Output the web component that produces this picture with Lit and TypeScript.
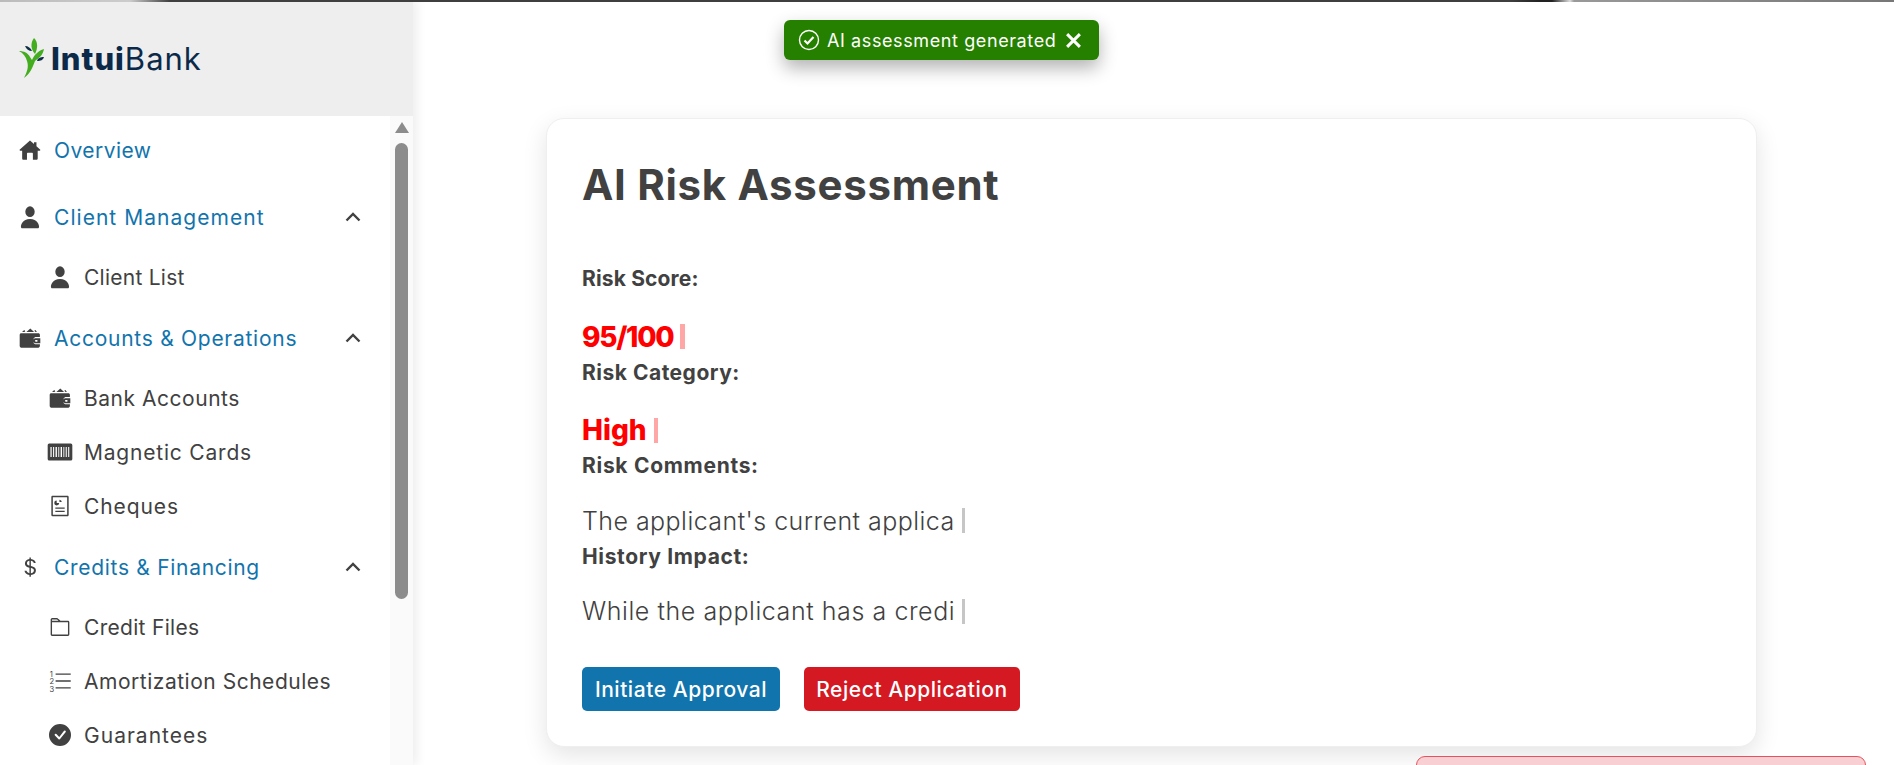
import { LitElement, html, css, svg } from "lit";
import { customElement } from "lit/decorators.js";

const ICONS: Record<string, any> = {
  home: svg`<path d="M8 1 .6 7.6a.5.5 0 0 0 .35.9H2.3v5.6c0 .5.4.9.9.9h2.6v-4.3c0-.4.3-.7.7-.7h2.9c.4 0 .7.3.7.7V15h2.6c.5 0 .9-.4.9-.9V8.500h1.350a.5.5 0 0 0 .35-.9L12.7 5.2V2.300h-1.800v1.300Z"/>`,
  person: svg`<g transform="translate(8 8) scale(1.1 1.25) translate(-8 -8)"><path d="M3 14.6s-1 0-1-1 1-4.400 6-4.400 6 3.400 6 4.400-1 1-1 1H3Zm5-6.600a3.100 3.100 0 1 0 0-6.200A3.100 3.100 0 0 0 8 8Z"/></g>`,
  wallet: svg`<path d="M1.6 4.6h12.5c.6 0 1.100.5 1.100 1.100v1.500h-3.400a3 3 0 0 0 0 5.400h3.400v1.300c0 .6-.5 1.100-1.100 1.100H1.600c-.6 0-1.100-.5-1.100-1.100V5.700c0-.6.5-1.100 1.100-1.100Zm10.300 3.600h3.600v3.600h-3.600a1.800 1.800 0 0 1 0-3.600Zm.2 1.200a.7.7 0 0 0 0 1.300h1.300V9.400ZM2.200 3.700l1.600-1.500.8.8-.7.7Zm3.200 0L8.200 1l2.800 2.700Zm6.600 0-.9-.9.9-.6 1 1.500Z"/>`,
  card: svg`<g transform="translate(8 8) scale(1.12 1.12) translate(-8 -8)"><path fill-rule="evenodd" d="M1 2.500h14a1 1 0 0 1 1 1v9a1 1 0 0 1-1 1H1a1 1 0 0 1-1-1v-9a1 1 0 0 1 1-1Zm.8 2.200v6.600h.8V4.700Zm1.700 0v6.600h.7V4.700Zm1.600 0v6.600h.9V4.700Zm1.800 0v6.600h.6V4.700Zm1.500 0v6.600h.9V4.700Zm1.800 0v6.600h.6V4.700Zm1.500 0v6.600h.7V4.700Zm1.600 0v6.600h.7V4.700Z"/></g>`,
  cheque: svg`<path fill-rule="evenodd" d="M2.600.5h10.800c.5 0 .9.4.9.9v13.200c0 .5-.4.9-.9.9H2.600a.9.9 0 0 1-.9-.9V1.400c0-.5.4-.9.9-.9Zm.2 1.100v12.800h10.400V1.600Z"/><path d="M5.600 4a1.800 1.800 0 1 0 1.800 1.800H5.600Zm2-.6v1.700h1.700a1.800 1.800 0 0 0-1.700-1.700ZM4.600 9h6.800v1H4.600Zm0 2.400h6.800v1H4.600Z"/>`,
  dollar: svg`<path d="M4 10.781c.148 1.667 1.513 2.850 3.591 3.003V15h1.043v-1.216c2.270-.179 3.678-1.438 3.678-3.300 0-1.590-.947-2.510-2.956-3.028l-.722-.187V3.467c1.122.11 1.879.714 2.070 1.616h1.470c-.166-1.600-1.540-2.748-3.540-2.875V1H7.591v1.233c-1.939.23-3.270 1.472-3.270 3.156 0 1.454.966 2.483 2.661 2.917l.61.162v4.031c-1.149-.17-1.940-.8-2.131-1.718H4zm3.391-3.836c-1.043-.263-1.600-.825-1.600-1.616 0-.944.704-1.641 1.800-1.828v3.495l-.2-.05zm1.591 1.872c1.287.323 1.852.859 1.852 1.769 0 1.097-.826 1.828-2.200 1.939V8.730l.348.086z"/>`,
  folder: svg`<path fill="none" stroke="currentColor" stroke-width="1" d="M1.700 3.900V2.600c0-.4.3-.6.6-.6h3.400c.3 0 .5.1.7.3L8.200 4h5.600c.3 0 .5.2.5.5v9c0 .3-.2.5-.5.5H2.200a.5.5 0 0 1-.5-.5V4h6.500"/>`,
  list: svg`<path fill="none" stroke="currentColor" stroke-width="1" d="M4.800 3h11M4.800 8h11M4.800 13h11"/><text x="0.6" y="5.200" font-size="5.500" font-family="Inter, sans-serif" fill="currentColor">1</text><text x="0.300" y="10.500" font-size="5.500" font-family="Inter, sans-serif" fill="currentColor">2</text><text x="0.300" y="15.800" font-size="5.500" font-family="Inter, sans-serif" fill="currentColor">3</text>`,
  check: svg`<path d="M16 8A8 8 0 1 1 0 8a8 8 0 0 1 16 0Zm-3.970-3.030a.75.75 0 0 0-1.080.02L7.480 9.420 5.380 7.300a.75.75 0 0 0-1.060 1.060L6.970 11a.75.75 0 0 0 1.080-.02l3.990-4.990a.75.75 0 0 0-.01-1.020Z"/>`,
};

type Item = { icon: string; label: string; ls: number };
type Group = Item & { children: Item[] };

const GROUPS: Group[] = [
  { icon: "home", label: "Overview", ls: 0.45, children: [] },
  {
    icon: "person",
    label: "Client Management",
    ls: 1.04,
    children: [{ icon: "person", label: "Client List", ls: 0.25 }],
  },
  {
    icon: "wallet",
    label: "Accounts & Operations",
    ls: 0.73,
    children: [
      { icon: "wallet", label: "Bank Accounts", ls: 0.53 },
      { icon: "card", label: "Magnetic Cards", ls: 0.8 },
      { icon: "cheque", label: "Cheques", ls: 0.9 },
    ],
  },
  {
    icon: "dollar",
    label: "Credits & Financing",
    ls: 0.7,
    children: [
      { icon: "folder", label: "Credit Files", ls: 0.3 },
      { icon: "list", label: "Amortization Schedules", ls: 0.52 },
      { icon: "check", label: "Guarantees", ls: 1.02 },
    ],
  },
];

@customElement("app-root")
export class AppRoot extends LitElement {
  static styles = css`
    :host {
      display: block;
      width: 1894px;
      height: 765px;
      overflow: hidden;
      position: relative;
      background: #fff;
      font-family: Inter, "Liberation Sans", sans-serif;
      color: #414141;
    }
    .topline {
      position: absolute;
      left: 0;
      right: 0;
      top: 0;
      height: 2px;
      z-index: 5;
      background: linear-gradient(90deg, #bbb 0, #ccc 130px, #3f3f3f 170px, #3f3f3f 1510px, #222 1540px, #222 1552px, #ddd 1570px, #999 1574px, #777 100%);
    }
    .layout {
      display: flex;
      height: 765px;
    }
    .sidebar {
      width: 413px;
      flex: none;
      display: flex;
      flex-direction: column;
      box-shadow: 4px 0 10px rgba(0, 0, 0, 0.07);
      overflow: hidden;
      position: relative;
      z-index: 1;
    }
    .brand {
      height: 116px;
      flex: none;
      background: #eeeeee;
      display: flex;
      align-items: center;
      padding-left: 19px;
      box-sizing: border-box;
      gap: 7px;
    }
    .brand-mark {
      width: 25px;
      height: 40px;
      flex: none;
    }
    .brand-text {
      font-size: 31px;
      line-height: 1;
      color: #0b2a4a;
      font-weight: 400;
      letter-spacing: 1px;
    }
    .brand-text b {
      font-weight: 800;
    }
    .side-body {
      flex: 1;
      display: flex;
      min-height: 0;
    }
    .nav {
      flex: 1;
      padding-top: 7px;
      min-width: 0;
    }
    .group {
      margin-bottom: 7px;
    }
    .group.single {
      margin-bottom: 13px;
    }
    .row {
      height: 54px;
      display: flex;
      align-items: center;
      font-size: 21px;
      white-space: nowrap;
    }
    .head {
      color: #1274ad;
      padding-left: 19px;
      margin-bottom: 6px;
    }
    .group.single .head {
      margin-bottom: 0;
    }
    .head svg.ic {
      margin-right: 13px;
    }
    .sub {
      padding-left: 49px;
      color: #414141;
    }
    .sub svg.ic {
      margin-right: 13px;
    }
    svg.ic {
      width: 22px;
      height: 22px;
      flex: none;
      fill: #414141;
      color: #414141;
      overflow: visible;
    }
    .chev {
      width: 18px;
      height: 18px;
      margin-left: auto;
      margin-right: 28px;
      fill: none;
      stroke: #414141;
      stroke-width: 2.4;
      flex: none;
    }
    .scroll {
      width: 23px;
      flex: none;
      background: #fafafa;
      display: flex;
      flex-direction: column;
      align-items: center;
      padding-top: 6px;
      box-sizing: border-box;
    }
    .arrow {
      width: 0;
      height: 0;
      border-left: 7px solid transparent;
      border-right: 7px solid transparent;
      border-bottom: 11px solid #8c8c8c;
    }
    .thumb {
      width: 13px;
      height: 456px;
      background: #8c8c8c;
      border-radius: 7px;
      margin-top: 10px;
    }
    .main {
      flex: 1;
      min-width: 0;
      padding: 118px 28px 0 133px;
      box-sizing: border-box;
      display: flex;
      flex-direction: column;
      overflow: hidden;
      background: #fff;
    }
    .card {
      width: 1211px;
      height: 629px;
      flex: none;
      box-sizing: border-box;
      border: 1px solid #efefef;
      border-radius: 18px;
      box-shadow: 0 8px 24px rgba(0, 0, 0, 0.11);
      padding: 0 35px;
      background: #fff;
    }
    h1 {
      margin: 0 0 53px;
      padding-top: 40px;
      line-height: 51px;
      font-size: 42px;
      font-weight: 700;
      letter-spacing: 0.7px;
      color: #414141;
    }
    .label {
      font-size: 21px;
      line-height: 32px;
      font-weight: 700;
      margin: 0;
    }
    .val {
      display: flex;
      align-items: center;
      margin: 0;
    }
    .score {
      height: 40px;
      margin-top: 21.5px;
      font-size: 28px;
      font-weight: 800;
      color: #ff0000;
    }
    .score.tight {
      letter-spacing: -1.3px;
    }
    .text {
      height: 40px;
      margin-top: 18.5px;
      font-size: 25px;
      font-weight: 300;
      letter-spacing: 0.45px;
    }
    .text.wide {
      letter-spacing: 0.57px;
    }
    .cur {
      display: inline-block;
      width: 4.5px;
      height: 25px;
      margin-left: 7px;
      background: rgba(255, 0, 0, 0.35);
    }
    .text .cur {
      width: 3px;
      background: rgba(65, 65, 65, 0.3);
    }
    .actions {
      display: flex;
      gap: 24px;
      margin-top: 36px;
    }
    button {
      height: 44px;
      border: 0;
      border-radius: 5px;
      color: #fff;
      font: inherit;
      font-size: 21px;
      font-weight: 500;
      letter-spacing: 0.55px;
      padding: 0;
      white-space: nowrap;
    }
    .approve {
      background: #1274ad;
      width: 198px;
    }
    .reject {
      background: #d41923;
      width: 216px;
    }
    .alert {
      flex: none;
      align-self: flex-end;
      width: 450px;
      height: 60px;
      margin-top: 9px;
      box-sizing: border-box;
      background: #f8d0d4;
      border: 1px solid #e8525c;
      border-radius: 9px;
    }
    .toast {
      position: absolute;
      left: 784px;
      top: 20px;
      width: 315px;
      height: 40px;
      box-sizing: border-box;
      background: #268000;
      border-radius: 6px;
      box-shadow: 0 8px 18px rgba(0, 0, 0, 0.3);
      color: #fff;
      display: flex;
      align-items: center;
      padding-left: 14px;
      gap: 7px;
      font-size: 18px;
      letter-spacing: 0.6px;
      white-space: nowrap;
      z-index: 3;
    }
    .toast svg {
      flex: none;
    }
    .toast .x {
      margin-left: 2px;
    }
  `;

  private icon(name: string) {
    return html`<svg class="ic" viewBox="0 0 16 16" aria-hidden="true">${ICONS[name]}</svg>`;
  }

  private labelText(text: string, ls: number) {
    return html`<span style="letter-spacing:${ls}px">${text}</span>`;
  }

  private renderGroup(g: Group) {
    return html`<div class="group ${g.children.length ? "" : "single"}">
      <div class="row head">
        ${this.icon(g.icon)}${this.labelText(g.label, g.ls)}
        ${g.children.length
          ? html`<svg class="chev" viewBox="0 0 18 18"><path d="M2.500 12.500 9 6l6.500 6.500" /></svg>`
          : ""}
      </div>
      ${g.children.map((c) => html`<div class="row sub">${this.icon(c.icon)}${this.labelText(c.label, c.ls)}</div>`)}
    </div>`;
  }

  render() {
    return html`
      <div class="topline"></div>
      <div class="layout">
        <aside class="sidebar">
          <div class="brand">
            <svg class="brand-mark" viewBox="0 0 25 40">
              <path fill="#43ad1f" d="M15 0c4 4 4 10 1 16-4-4-5-11-1-16Z" />
              <path fill="#43ad1f" d="M0 13c5 0 9 2 11 6l2 3c2-5 6-9 12-11-1 6-5 9-9 12-2 5-4 12-11 17 3-6 5-11 3-17-1-4-4-8-8-10Z" />
              <path fill="#0f2e4a" d="M6 8c3 0 6 2 7 5-3 0-6-2-7-5ZM18 23c1-3 3-4 7-4-1 3-3 4-7 4Z" />
            </svg>
            <span class="brand-text"><b>Intui</b>Bank</span>
          </div>
          <div class="side-body">
            <nav class="nav">${GROUPS.map((g) => this.renderGroup(g))}</nav>
            <div class="scroll"><div class="arrow"></div><div class="thumb"></div></div>
          </div>
        </aside>
        <main class="main">
          <section class="card">
            <h1>AI Risk Assessment</h1>
            <p class="label">${this.labelText("Risk Score:", 0.15)}</p>
            <p class="val score tight">95/100<span class="cur"></span></p>
            <p class="label">${this.labelText("Risk Category:", 0.5)}</p>
            <p class="val score">High<span class="cur"></span></p>
            <p class="label">${this.labelText("Risk Comments:", 0.7)}</p>
            <p class="val text">The applicant's current applica<span class="cur"></span></p>
            <p class="label">${this.labelText("History Impact:", 0.65)}</p>
            <p class="val text wide">While the applicant has a credi<span class="cur"></span></p>
            <div class="actions">
              <button class="approve">Initiate Approval</button>
              <button class="reject">Reject Application</button>
            </div>
          </section>
          <div class="alert"></div>
        </main>
      </div>
      <div class="toast">
        <svg width="22" height="22" viewBox="0 0 22 22" fill="none" stroke="#fff">
          <circle cx="11" cy="11" r="9.500" stroke-width="1.400" />
          <path d="M6.500 11.500l3 3 6-6.500" stroke-width="2.200" />
        </svg>
        <span>AI assessment generated</span>
        <svg class="x" width="17" height="17" viewBox="0 0 16 16" fill="none" stroke="#fff" stroke-width="2.800">
          <path d="M2 2l12 12M14 2 2 14" />
        </svg>
      </div>
    `;
  }
}
